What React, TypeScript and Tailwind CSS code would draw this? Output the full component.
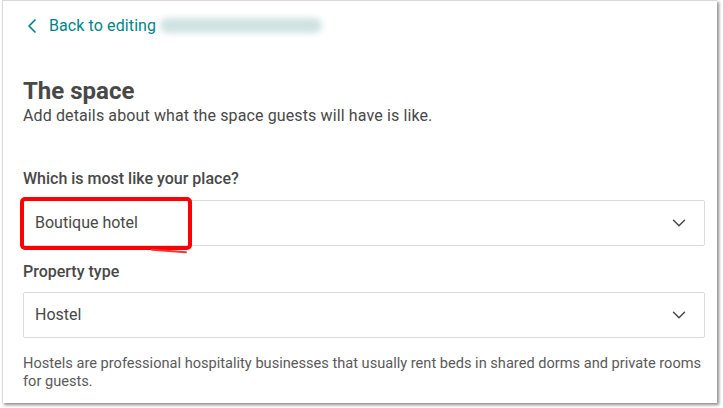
import { ChevronDown, ChevronLeft } from 'lucide-react'

function Select({ value }: { value: string }) {
  return (
    <div className="flex h-[46px] items-center justify-between rounded-[2px] border border-[#dbdbdb] bg-white pl-[11px] pr-[14px]">
      <span className="text-[16px] text-[#484848]">{value}</span>
      <ChevronDown className="h-[22px] w-[22px] text-[#484848]" strokeWidth={1.6} />
    </div>
  )
}

export default function App() {
  return (
    <div className="h-[408px] w-[723px] bg-white" style={{ fontFamily: 'Roboto, "Open Sans", sans-serif' }}>
      <div className="ml-[2px] h-[403px] w-[715px] border-l border-t border-[#d9d9d9] bg-white pl-[20px] pr-[12px] shadow-[2px_2px_3px_rgba(0,0,0,0.45)]">
        <div className="flex h-[48px] items-center pt-[1px]">
          <ChevronLeft className="-ml-[3px] mr-[5px] h-[24px] w-[24px] text-[#008489]" strokeWidth={1.7} />
          <span className="text-[16px] tracking-[0.1px] text-[#008489]">Back to editing</span>
          <span className="ml-[4px] h-[15px] w-[162px] rounded-full bg-[#cfe2e2] blur-[3px]" />
        </div>

        <h1 className="mt-[28px] text-[24px] font-bold leading-[28px] text-[#484848]">The space</h1>
        <p className="mt-[1px] text-[16px] leading-[20px] tracking-[0.12px] text-[#484848]">Add details about what the space guests will have is like.</p>

        <div className="mt-[43px] text-[16px] font-medium leading-[20px] text-[#484848]">Which is most like your place?</div>
        <div className="relative mt-[11px]">
          <Select value="Boutique hotel" />
          <div className="pointer-events-none absolute left-[-3px] top-[-3px] h-[53px] w-[172px] rounded-[5px] border-[4px] border-[#ff0000]" />
          <div className="pointer-events-none absolute left-[128px] top-[50px] h-[2px] w-[36px] rotate-[4deg] rounded-full bg-[#ff3030]" />
        </div>

        <div className="mt-[16px] text-[16px] font-medium leading-[20px] text-[#484848]">Property type</div>
        <div className="mt-[10px]">
          <Select value="Hostel" />
        </div>

        <p className="mt-[16px] text-[14.6px] leading-[18px] text-[#5a5a5a]">
          Hostels are professional hospitality businesses that usually rent beds in shared dorms and private rooms for guests.
        </p>
      </div>
    </div>
  )
}
